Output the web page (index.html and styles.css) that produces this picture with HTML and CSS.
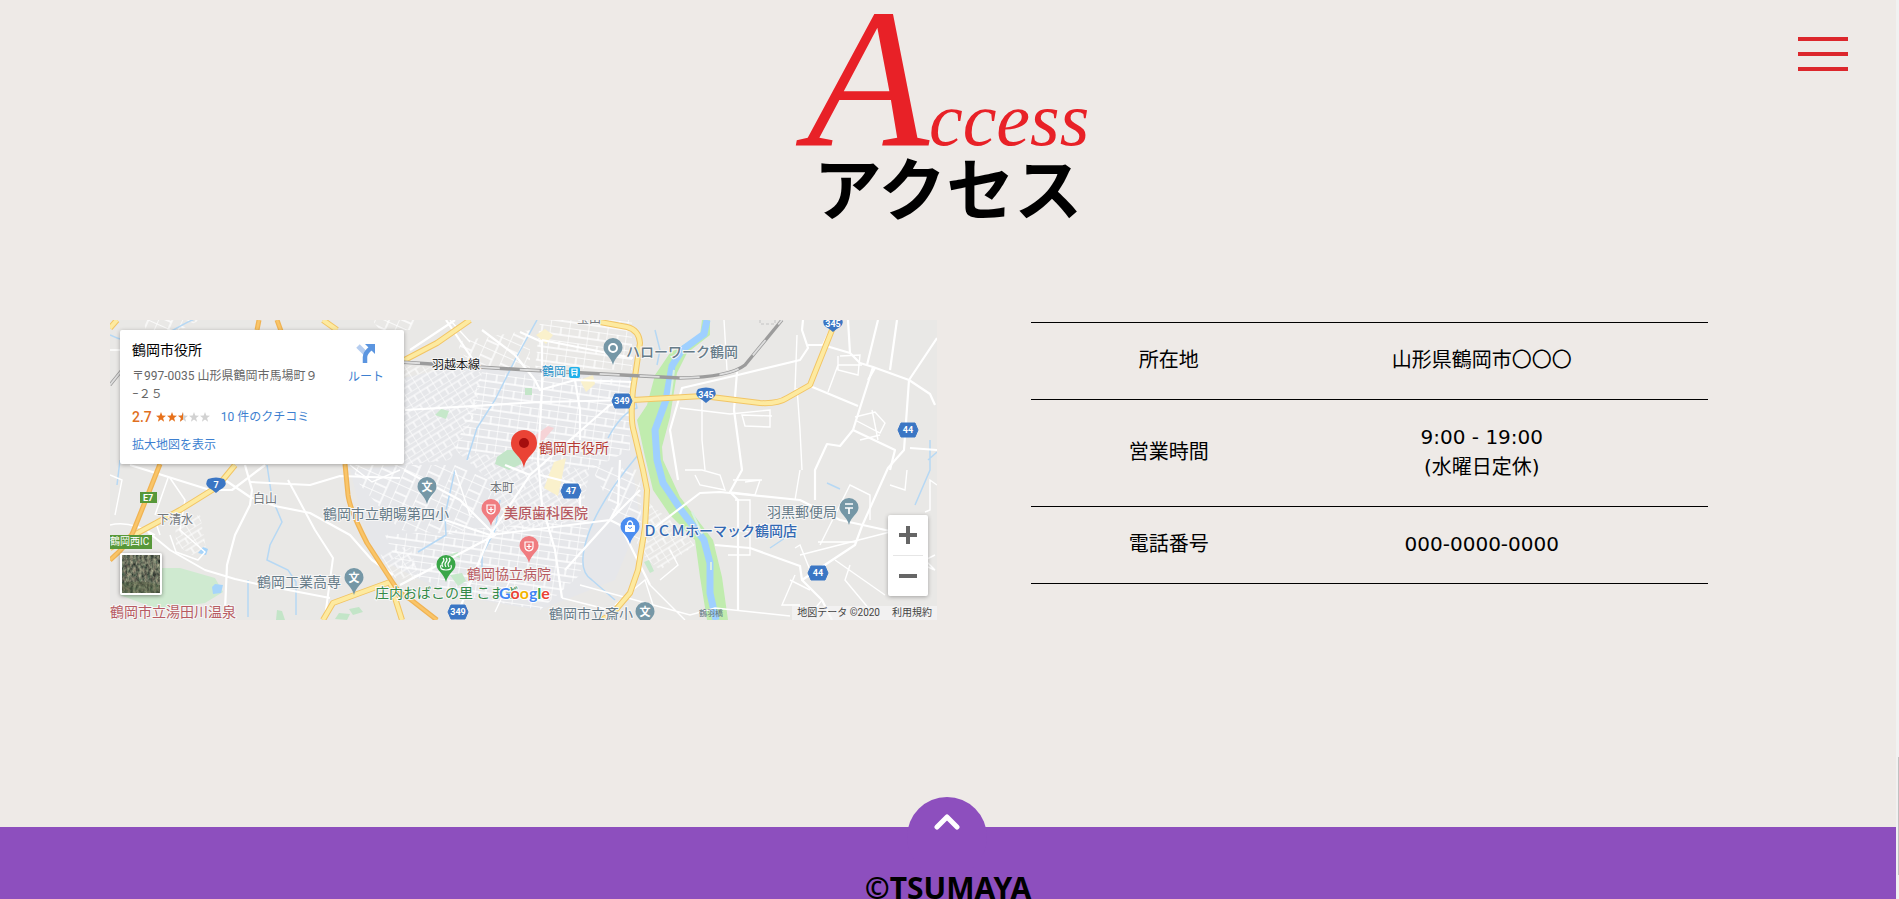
FILE: index.html
```html
<!DOCTYPE html>
<html lang="ja">
<head>
<meta charset="utf-8">
<meta name="viewport" content="width=device-width, initial-scale=1">
<title>アクセス | TSUMAYA</title>
<link rel="stylesheet" href="styles.css">
</head>
<body>
<button class="menu-button" type="button" aria-label="メニュー"><span></span><span></span><span></span></button>

<main class="access">
  <h2 class="heading">
    <span class="heading-script" lang="en"><span class="heading-initial">A</span>ccess</span>
    <span class="heading-title">アクセス</span>
  </h2>

  <div class="access-body">
    <div class="map">
      <svg class="map-canvas" viewBox="0 0 827 300" preserveAspectRatio="xMidYMid slice" role="img" aria-label="鶴岡市役所周辺の地図">
        <defs>
          <pattern id="gridA" width="19" height="14" patternUnits="userSpaceOnUse" patternTransform="rotate(8)">
            <path d="M0 0H19M0 0V14M11 0V8M0 8H19" fill="none" stroke="#fff" stroke-width="1.3"/>
          </pattern>
          <pattern id="gridB" width="15" height="11" patternUnits="userSpaceOnUse" patternTransform="rotate(-32)">
            <path d="M0 0H15M0 0V11M8 5V11M0 5H15" fill="none" stroke="#fff" stroke-width="1.2"/>
          </pattern>
          <pattern id="gridC" width="22" height="16" patternUnits="userSpaceOnUse" patternTransform="rotate(24)">
            <path d="M0 0H22M0 0V16M13 0V16M0 9H13" fill="none" stroke="#fff" stroke-width="1.3"/>
          </pattern>
          <symbol id="pin" viewBox="0 0 20 28" overflow="visible">
            <path d="M10 0A9.500 9.500 0 0 0 .5 9.500C.5 16 8 18 10 27C12 18 19.500 16 19.500 9.500A9.500 9.500 0 0 0 10 0Z"/>
          </symbol>
          <symbol id="hex" viewBox="0 0 22 14" overflow="visible">
            <path d="M4 0H18L21 7L18 14H4L1 7Z" fill="#3b76c4" stroke="#3b76c4" stroke-linejoin="round"/>
          </symbol>
          <symbol id="shield" viewBox="0 0 20 15" overflow="visible">
            <path d="M2 1Q10-2 18 1Q22 6 17 10Q13 12 10 15Q7 12 3 10Q-2 6 2 1Z" fill="#3b76c4"/>
          </symbol>
        </defs>
        <rect width="827" height="300" fill="#e9e8e6"/>

        <path d="M294 58L350 45L420 50L520 55L520 130L530 200L505 260L430 290L340 275L262 235L240 150L294 145Z" fill="#e6e7ea"/>
        <path d="M294 45L372 52L365 95L340 140L294 145Z" fill="url(#gridB)"/>
        <path d="M372 52L520 60L520 130L480 150L345 130Z" fill="url(#gridA)"/>
        <path d="M430 0H522V50L425 48Z" fill="url(#gridA)"/>
        <path d="M345 22L420 10L420 48L360 45Z" fill="url(#gridC)"/>
        <path d="M240 145H345L390 165L350 215L290 210L250 165Z" fill="url(#gridC)"/>
        <path d="M345 130L480 150L470 200L380 215L385 165Z" fill="url(#gridB)"/>
        <path d="M275 215L480 200L470 255L430 290L350 275L290 250Z" fill="url(#gridA)"/>
        <path d="M480 145L530 150L532 230L505 195Z" fill="url(#gridC)"/>
        <path d="M535 180L560 200L585 225L550 250L532 235Z" fill="url(#gridB)"/>
        <path d="M33 0H90L70 10H36ZM262 0H310L300 10H270Z" fill="url(#gridC)"/>
        <path d="M65 200L90 195L96 228L84 236L66 225ZM270 235L300 225L310 260L285 258Z" fill="url(#gridB)"/>

        <path d="M50 248L70 248L105 258L113 272L95 283L50 290L10 275Z" fill="#cfead0"/>
        <path d="M167 290l5 1l3 9h-9zM225 299l4-6 11 1-3 6zM239 289l10-2 4 5-10 3zM415 68h7v7h-7zM387 137l10-7 14 0 0 14-12 6-14-6z" fill="#c3e5c8"/>
        <path d="M325 95l6-6 8 2-3 8zM534 242l5-2 5 11-4 2zM340 255l12-2 4 8-8 5zM338 235l10-3 2 6z" fill="#c6e8ca"/>
        <path d="M426 15l9-6 8 6-7 9zM444 142l12-4-8 38-14-8zM470 60l13-5 2 9-9 8z" fill="#faf1cc"/>
        <path d="M424 116l14-10 6 2-12 14z" fill="#f6d3d6"/>

        <path d="M592 0L590 15L560 33L545 55L537 85L527 100L535 137L543 170L560 195L585 220L590 257L597 300H618L612 257L603 220L570 177L553 140L552 127L560 97L567 53L577 33L600 15V0Z" fill="#c0ecae"/>
        <path d="M597 0L594 14L572 30L562 46L556 80L545 110L547 140L553 163L571 190L594 220L600 243L600 273L606 300" fill="none" stroke="#9fd0ff" stroke-width="7"/>
        <path d="M582 192L592 214M601 242V250M560 80L564 50" fill="none" stroke="#d9f0e3" stroke-width="2"/>
        <g fill="none" stroke="#b6d8f4" stroke-width="1.5">
          <path d="M0 15Q30 30 60 12T90 0M10 140L7 165M157 145L162 178L172 202L160 225L157 240L178 250L186 262V295"/>
          <path d="M427 0L405 40L385 80L367 108L357 140M498 118Q512 92 527 88L520 55M545 10L550 30L547 45"/>
          <path d="M345 150L335 195L336 215L308 232M390 180L385 210L372 235V262M528 135Q490 180 478 215T482 260L505 280M138 297V260"/>
          <path d="M820 120V150L805 185M818 140L827 132M717 163L730 169M660 228L675 218"/>
        </g>
        <path d="M88 233l5-6 5 2-2 6zM102 267l3-3 8 1-2 8-8 1z" fill="#a6d4fa"/>

        <g fill="none" stroke="#fff" stroke-width="2.200" stroke-linejoin="round">
          <path d="M20 145L100 170L122 170L155 145M135 145L142 170L140 185L125 215L117 245L115 290M115 160L140 177L165 186L200 193L240 215L262 240L283 255"/>
          <path d="M140 162L200 165L230 156L290 158M38 212L60 230L95 250L125 259L147 264M147 264L220 278M178 160L205 210L223 238L220 260L215 297" stroke-width="2"/>
          <path d="M58 158L45 195M60 158L75 180L70 210L95 232L88 240L66 232L60 215M45 200L50 215M0 205Q20 200 45 215" stroke-width="1.500"/>
          <path d="M295 90L430 82L523 80M432 20V70L428 140L432 185L445 230L452 278M432 22L410 12M432 20L523 38"/>
          <path d="M300 30L345 0M336 0L370 50M405 35L372 10M405 35L425 60L430 70L465 60L523 62M465 60L470 90L470 120"/>
          <path d="M430 155L470 165L470 200M395 145L420 155L460 120L500 85L523 80M420 155L380 215L420 210L500 200L530 170"/>
          <path d="M335 200L380 215M294 150L350 180L385 215L290 265M380 215L345 300M500 200L510 205L540 265M500 200L455 250M510 140L508 185L500 200"/>
          <path d="M535 215L590 173L610 172L690 180L730 200L780 211M605 225L640 228L690 246L692 260L712 280L722 300M692 260L745 225L752 206L778 148L794 130L799 60"/>
          <path d="M693 0L692 10L698 28L690 40L628 55L572 68L560 110L568 160M627 52L624 90L632 150L620 172L628 180L628 290"/>
          <path d="M698 25L713 25L725 0M713 25L740 33L750 43L763 47L799 60L820 74L825 85M799 60L827 18M763 47L743 110L730 126L717 124L705 150V180"/>
          <path d="M700 66L748 86M765 48L758 60M787 0L780 50M768 0L757 45M738 0L740 33M827 130L800 128M743 110L785 130L780 150"/>
        </g>
        <g fill="none" stroke="#fff" stroke-width="1.400">
          <path d="M614 0L617 50M687 68L690 110L692 150M685 70L687 15M592 80L592 120L595 150M570 88L620 94L660 90V107L635 106L632 95L662 96"/>
          <path d="M728 36V50L748 55L750 35L730 36M728 45H752M718 72L728 45M745 97L765 92L775 103L770 113L745 100M762 90L768 120"/>
          <path d="M575 150H592L610 155L615 170L590 165L585 155M635 162L650 160L645 175L620 172M623 160H652M685 180L690 150M685 228L690 225L700 250M690 235L780 212"/>
          <path d="M710 225L740 165L760 175V200M708 222H745M685 255L672 285L690 285M680 260L700 270M712 280L700 295M725 240L775 275M740 245L735 260L760 290"/>
          <path d="M624 210L640 212V235L618 235M625 180L640 180L640 210M797 150L795 170L780 165M815 192L820 190V160L827 165M813 245L825 250L815 240L825 235"/>
          <path d="M560 230L568 245L550 260M540 265L575 300M470 265L580 295L605 288L680 296M0 30H12M0 155L12 160L5 195M340 0L360 22"/>
          <path d="M505 285L535 260L543 285M452 278L500 290M385 292L400 260M345 150L360 195M240 145L262 162L290 150M750 120L770 115"/>
        </g>

        <g fill="none" stroke-linejoin="round">
          <g stroke="#f2c565" stroke-width="6">
            <path d="M0 8L7 0M213 0L227 10M360 0L327 23L285 45M125 145L107 167L70 190L0 228M213 300L223 283L250 273L280 262L292 300M490 2L517 7Q529 10 530 23L523 70Q520 100 524 112L533 150L537 170L535 207L528 250L520 273L503 293L490 301M523 80L593 76L650 83Q668 84 677 78L700 65L726 0"/>
          </g>
          <path d="M0 8L7 0M213 0L227 10M360 0L327 23L285 45M125 145L107 167L70 190L0 228M213 300L223 283L250 273L280 262L292 300M490 2L517 7Q529 10 530 23L523 70Q520 100 524 112L533 150L537 170L535 207L528 250L520 273L503 293L490 301M523 80L593 76L650 83Q668 84 677 78L700 65L726 0" stroke="#fdeaa0" stroke-width="4"/>
          <path d="M149 0L147 10M167 0L171 11M50 144L37 177L23 212Q18 225 0 240M235 144L238 175Q240 190 257 223L283 263Q290 275 300 279L327 300" stroke="#f0b353" stroke-width="5"/>
          <path d="M149 0L147 10M167 0L171 11M50 144L37 177L23 212Q18 225 0 240M235 144L238 175Q240 190 257 223L283 263Q290 275 300 279L327 300" stroke="#f9c569" stroke-width="2.500"/>
          <path d="M0 65L12 50M290 42L417 50L570 58Q620 57 635 45L672 0" stroke="#9c9c9c" stroke-width="3.400"/>
          <path d="M0 65L12 50M290 42L417 50L570 58Q620 57 635 45L672 0" stroke="#dedede" stroke-width="1.800" stroke-dasharray="20 20"/>
          <path d="M650 0V4H665V0" stroke="#c4c4c4" stroke-dasharray="3 2"/>
        </g>

        <use href="#pin" x="493" y="18" width="20" height="28" fill="#7597a6"/>
        <circle cx="503" cy="28" r="4" fill="none" stroke="#fff" stroke-width="2"/>
        <use href="#pin" x="307" y="157" width="20" height="28" fill="#7597a6"/>
        <use href="#pin" x="234" y="248" width="20" height="28" fill="#7597a6"/>
        <use href="#pin" x="525" y="282" width="20" height="28" fill="#7597a6"/>
        <use href="#pin" x="729" y="178" width="20" height="28" fill="#7597a6"/>
        <use href="#pin" x="371" y="179" width="20" height="28" fill="#f07c80"/>
        <use href="#pin" x="409" y="216" width="20" height="28" fill="#f07c80"/>
        <use href="#pin" x="326" y="235" width="20" height="28" fill="#3aa648"/>
        <use href="#pin" x="510" y="197" width="20" height="28" fill="#4b8df0"/>
        <g class="pin-text">
          <text x="317" y="171">文</text><text x="244" y="262">文</text><text x="535" y="296">文</text>
        </g>
        <path d="M735 184H743M735 188H743M739 188V194" stroke="#fff" stroke-width="1.700"/>
        <g fill="none" stroke="#fff" stroke-width="1.200">
          <path d="M377 185H385V190Q385 193 381 194Q377 193 377 190ZM381 187V192M378.500 189.500H383.500"/>
          <path d="M415 222H423V227Q423 230 419 231Q415 230 415 227ZM419 224V229M416.500 226.500H421.500"/>
          <path d="M333 247Q331 244 333 242T333 238M336 247Q334 244 336 242T336 238M339 247Q337 244 339 242T339 238M331 245Q329 250 336 250T341 245"/>
        </g>
        <rect x="515" y="205" width="10" height="7" rx="1" fill="#fff"/>
        <path d="M517.500 205V203Q520 199 522.500 203V205" fill="none" stroke="#fff" stroke-width="1.300"/>
        <path d="M518 207Q520 210 522 207" fill="none" stroke="#4b8df0"/>

        <path d="M414 110A13 13 0 0 0 401 123C401 134 412 135 414 148C416 135 427 134 427 123A13 13 0 0 0 414 110Z" fill="#ea4335"/>
        <circle cx="414" cy="123" r="5" fill="#a50e0e"/>

        <use href="#hex" x="501" y="74" width="22" height="14"/>
        <use href="#hex" x="337" y="285" width="22" height="14"/>
        <use href="#hex" x="450" y="164" width="22" height="14"/>
        <use href="#hex" x="787" y="103" width="22" height="14"/>
        <use href="#hex" x="697" y="246" width="22" height="14"/>
        <use href="#shield" x="586" y="68" width="20" height="15"/>
        <use href="#shield" x="713" y="-3" width="20" height="15"/>
        <use href="#shield" x="96" y="158" width="20" height="15"/>
        <g class="route-number">
          <text x="512" y="84">349</text><text x="348" y="295">349</text><text x="461" y="174">47</text>
          <text x="798" y="113">44</text><text x="708" y="256">44</text><text x="596" y="78">345</text>
          <text x="723" y="7">345</text><text x="106" y="168">7</text>
        </g>
        <rect x="30" y="172" width="17" height="11" fill="#57983a"/>
        <text class="route-number" x="38" y="181">E7</text>
        <rect y="215" width="42" height="14" fill="#57983a"/>
        <text class="exit-label" x="0" y="225">鶴岡西IC</text>
        <rect x="459" y="47" width="11" height="11" rx="2" fill="#1fb0ea"/>
        <path d="M462 49H467V54H462ZM462 56L463 54M467 56L466 54M462 51.500H467" fill="none" stroke="#fff" stroke-width="1.200"/>

        <g class="label label-small">
          <text x="467" y="3">宝山</text><text x="143" y="183">白山</text><text x="47" y="204">下清水</text><text x="380" y="172">本町</text>
          <text class="rail" x="322" y="49">羽越本線</text>
          <text class="station" x="432" y="56">鶴岡</text>
        </g>
        <g class="label">
          <text class="strong" x="516" y="37">ハローワーク鶴岡</text>
          <text x="213" y="199">鶴岡市立朝暘第四小</text>
          <text x="147" y="267">鶴岡工業高専</text>
          <text x="439" y="299">鶴岡市立斎小</text>
          <text x="657" y="197">羽黒郵便局</text>
          <text class="place" x="429" y="133">鶴岡市役所</text>
          <text class="medical strong" x="394" y="198">美原歯科医院</text>
          <text class="medical" x="357" y="259">鶴岡協立病院</text>
          <text class="medical" x="0" y="297">鶴岡市立湯田川温泉</text>
          <text class="leisure" x="265" y="278">庄内おばこの里 こまぎ</text>
          <text class="shop strong" x="533" y="216">ＤＣＭホーマック鶴岡店</text>
        </g>
        <text class="bridge" x="589" y="296">鶴羽橋</text>
        <text class="brand" x="389" y="279"><tspan fill="#4285f4">G</tspan><tspan fill="#ea4335">o</tspan><tspan fill="#f4b400">o</tspan><tspan fill="#4285f4">g</tspan><tspan fill="#34a853">l</tspan><tspan fill="#ea4335">e</tspan></text>
      </svg>

      <div class="place-card">
        <div class="place-info">
          <strong class="place-name">鶴岡市役所</strong>
          <span class="place-address">〒997-0035 山形県鶴岡市馬場町９<br>−２５</span>
          <div class="rating">
            <b>2.7</b>
            <svg viewBox="0 0 55 10" width="55" height="10" aria-hidden="true">
              <defs><path id="star" d="M5 0L6.300 3.500L10 3.700L7.100 6L8.100 9.700L5 7.600L1.900 9.700L2.900 6L0 3.700L3.700 3.500Z"/></defs>
              <g fill="#e7711b"><use href="#star"/><use href="#star" x="11"/></g>
              <g fill="#d2d2d2"><use href="#star" x="22"/><use href="#star" x="33"/><use href="#star" x="44"/></g>
              <path d="M27 0V7.600L23.900 9.700L24.900 6L22 3.700L25.700 3.500Z" fill="#e7711b"/>
            </svg>
            <a href="#reviews">10 件のクチコミ</a>
          </div>
          <a href="#map">拡大地図を表示</a>
        </div>
        <a class="directions" href="#directions">
          <svg viewBox="0 0 20 20" width="20" height="20" aria-hidden="true">
            <path d="M2 3L10 11" stroke="#b5cdf0" stroke-width="5"/><path d="M9 20V14Q9 10 15 5" fill="none" stroke="#5b95e0" stroke-width="4.500"/><path d="M9 1H19V11Z" fill="#5b95e0"/>
          </svg>
          ルート
        </a>
      </div>

      <button class="satellite" type="button" aria-label="航空写真">
        <svg viewBox="0 0 38 38" aria-hidden="true">
          <filter id="terrain" x="0" y="0" width="1" height="1" color-interpolation-filters="sRGB"><feTurbulence type="fractalNoise" baseFrequency=".35 .22" numOctaves="3" seed="4"/><feColorMatrix values=".7 .3 0 0 -.08  .6 .4 0 0 -.06  .5 .3 0 0 -.03  0 0 0 0 1"/></filter>
          <rect width="38" height="38" filter="url(#terrain)"/>
          <path d="M0 28Q20 24 38 30V38H0Z" fill="#4d5f3c" opacity=".35"/>
        </svg>
      </button>
      <div class="zoom-control">
        <button type="button" aria-label="拡大"><svg viewBox="0 0 18 18" width="18" height="18"><path d="M0 9H18M9 0V18" stroke="#666" stroke-width="4"/></svg></button>
        <button type="button" aria-label="縮小"><svg viewBox="0 0 18 18" width="18" height="18"><path d="M0 9H18" stroke="#666" stroke-width="4"/></svg></button>
      </div>
      <div class="attribution"><span>地図データ ©2020</span><a href="#terms">利用規約</a></div>
    </div>

    <table class="details">
      <tbody>
        <tr><th scope="row">所在地</th><td>山形県鶴岡市〇〇〇</td></tr>
        <tr><th scope="row">営業時間</th><td>9:00 - 19:00<br>(水曜日定休)</td></tr>
        <tr><th scope="row">電話番号</th><td>000-0000-0000</td></tr>
      </tbody>
    </table>
  </div>
</main>

<footer class="footer">
  <a class="to-top" href="#top" aria-label="ページの先頭へ">
    <svg viewBox="0 0 26 16" width="26" height="16"><path d="M3 13L13 3L23 13" fill="none" stroke="#fff" stroke-width="5" stroke-linecap="round" stroke-linejoin="round"/></svg>
  </a>
  <small class="copyright">©TSUMAYA</small>
</footer>
<div class="scroll-track" aria-hidden="true"><div class="scroll-thumb"></div></div>
</body>
</html>
```
FILE: styles.css
```css
* { box-sizing: border-box; }

html { height: 100%; overflow: hidden; }

body {
  display: flex;
  flex-direction: column;
  height: 100%;
  margin: 0;
  padding-right: 3px;
  overflow: hidden;
  background: #eeeae7;
  color: #000;
  font-family: "DejaVu Sans", "Noto Sans CJK JP", sans-serif;
  font-size: 20px;
  line-height: 30px;
}

button { padding: 0; border: 0; background: none; cursor: pointer; }
a { color: #3d7fd0; text-decoration: none; }

.menu-button {
  position: fixed;
  top: 37px;
  right: 51px;
  display: grid;
  gap: 11px;
  width: 50px;
}
.menu-button span { height: 4px; background: #dc272c; }

.access { flex: none; }

.heading {
  display: flex;
  flex-direction: column;
  align-items: center;
  margin: 0;
  font-weight: 700;
}
.heading-script {
  height: 148px;
  color: #e82127;
  font-family: "Liberation Serif", serif;
  font-size: 76px;
  font-style: italic;
  font-weight: 400;
  line-height: 156px;
}
.heading-initial { font-size: 200px; }
.heading-title {
  font-family: "Noto Sans CJK JP", sans-serif;
  font-size: 68px;
  line-height: 76px;
}

.access-body {
  display: grid;
  grid-template-columns: 827fr 677fr;
  gap: 94px;
  align-items: start;
  padding: 96px 188px 0 110px;
}

.map {
  position: relative;
  height: 300px;
  overflow: hidden;
  font-family: Roboto, "Noto Sans CJK JP", sans-serif;
}
.map-canvas { display: block; width: 100%; height: 100%; }

.label {
  fill: #667b88;
  stroke: #f6f6f6;
  stroke-width: 2px;
  paint-order: stroke;
  font-family: "Noto Sans CJK JP", sans-serif;
  font-size: 14px;
}
.label-small { fill: #73777c; font-size: 12px; }
.label .strong { font-weight: 500; }
.label .rail { fill: #222; }
.label .station { fill: #1b8fc8; }
.label .place { fill: #b53a35; }
.label .medical { fill: #b75b62; }
.label .leisure { fill: #348a48; }
.label .shop { fill: #3268b2; }
.pin-text {
  fill: #fff;
  font-family: "Noto Sans CJK JP", sans-serif;
  font-size: 11px;
  font-weight: 700;
  text-anchor: middle;
}
.route-number {
  fill: #fff;
  font-size: 9px;
  font-weight: 700;
  text-anchor: middle;
}
.exit-label { fill: #fff; font-size: 10px; }
.bridge { fill: #5f7580; font-size: 8px; }
.brand {
  stroke: #fff;
  stroke-width: 2px;
  paint-order: stroke;
  font-family: Lato, sans-serif;
  font-size: 16px;
  font-weight: 700;
}

.place-card {
  position: absolute;
  top: 10px;
  left: 10px;
  display: flex;
  justify-content: space-between;
  width: 284px;
  padding: 10px 20px 10px 12px;
  border-radius: 2px;
  background: #fff;
  box-shadow: 0 1px 4px rgba(0, 0, 0, .3);
  font-size: 12px;
  line-height: 18px;
}
.place-info { display: flex; flex-direction: column; }
.place-name { font-size: 14px; font-weight: 400; line-height: 20px; }
.place-address { margin-top: 7px; color: #666; }
.rating { display: flex; align-items: center; gap: 4px; margin: 5px 0 10px; }
.rating b { color: #e0701f; font-size: 14px; font-weight: 500; }
.rating a { margin-left: 6px; }
.directions {
  display: flex;
  flex-direction: column;
  align-items: center;
  gap: 5px;
  padding-top: 3px;
}

.satellite {
  position: absolute;
  left: 10px;
  bottom: 25px;
  width: 42px;
  height: 42px;
  border: 2px solid #fff;
  border-radius: 2px;
  box-shadow: 0 1px 4px rgba(0, 0, 0, .4);
}
.satellite svg { display: block; width: 100%; height: 100%; }

.zoom-control {
  position: absolute;
  right: 9px;
  bottom: 24px;
  width: 40px;
  padding: 0 5px;
  border-radius: 2px;
  background: #fff;
  box-shadow: 0 1px 4px rgba(0, 0, 0, .3);
}
.zoom-control button {
  display: grid;
  place-items: center;
  width: 100%;
  height: 40px;
}
.zoom-control button + button { height: 41px; border-top: 1px solid #e6e6e6; }

.attribution {
  position: absolute;
  right: 0;
  bottom: 0;
  display: flex;
  gap: 12px;
  padding: 0 5px;
  background: rgba(245, 245, 245, .7);
  color: #444;
  font-size: 10px;
  line-height: 14px;
}
.attribution a { color: #444; }

.details {
  width: 100%;
  margin-top: 2px;
  border-collapse: collapse;
  border-bottom: 1px solid #000;
  table-layout: fixed;
  text-align: center;
}
.details tr { border-top: 1px solid #000; }
.details th { width: 41%; padding: 22px 2px 24px 0; font-weight: 400; }
.details td { padding: 22px 53px 24px 0; font-weight: 400; }

.footer {
  position: relative;
  display: flex;
  flex: 1;
  justify-content: center;
  margin-top: 207px;
  padding-top: 40px;
  background: #8d4fbe;
}
.to-top {
  position: absolute;
  top: -30px;
  left: 50%;
  display: flex;
  justify-content: center;
  width: 80px;
  height: 80px;
  margin-left: -41px;
  padding-top: 17px;
  border-radius: 50%;
  background: #8d4fbe;
}
.copyright {
  position: relative;
  font-family: "Noto Sans", sans-serif;
  font-size: 30px;
  font-weight: 700;
  line-height: 42px;
}

.scroll-track {
  position: fixed;
  top: 0;
  right: 0;
  bottom: 0;
  width: 3px;
  padding: 757px 0 0 2px;
  background: #f1f1f1;
}
.scroll-thumb { height: 118px; background: #c1c1c1; }
```
